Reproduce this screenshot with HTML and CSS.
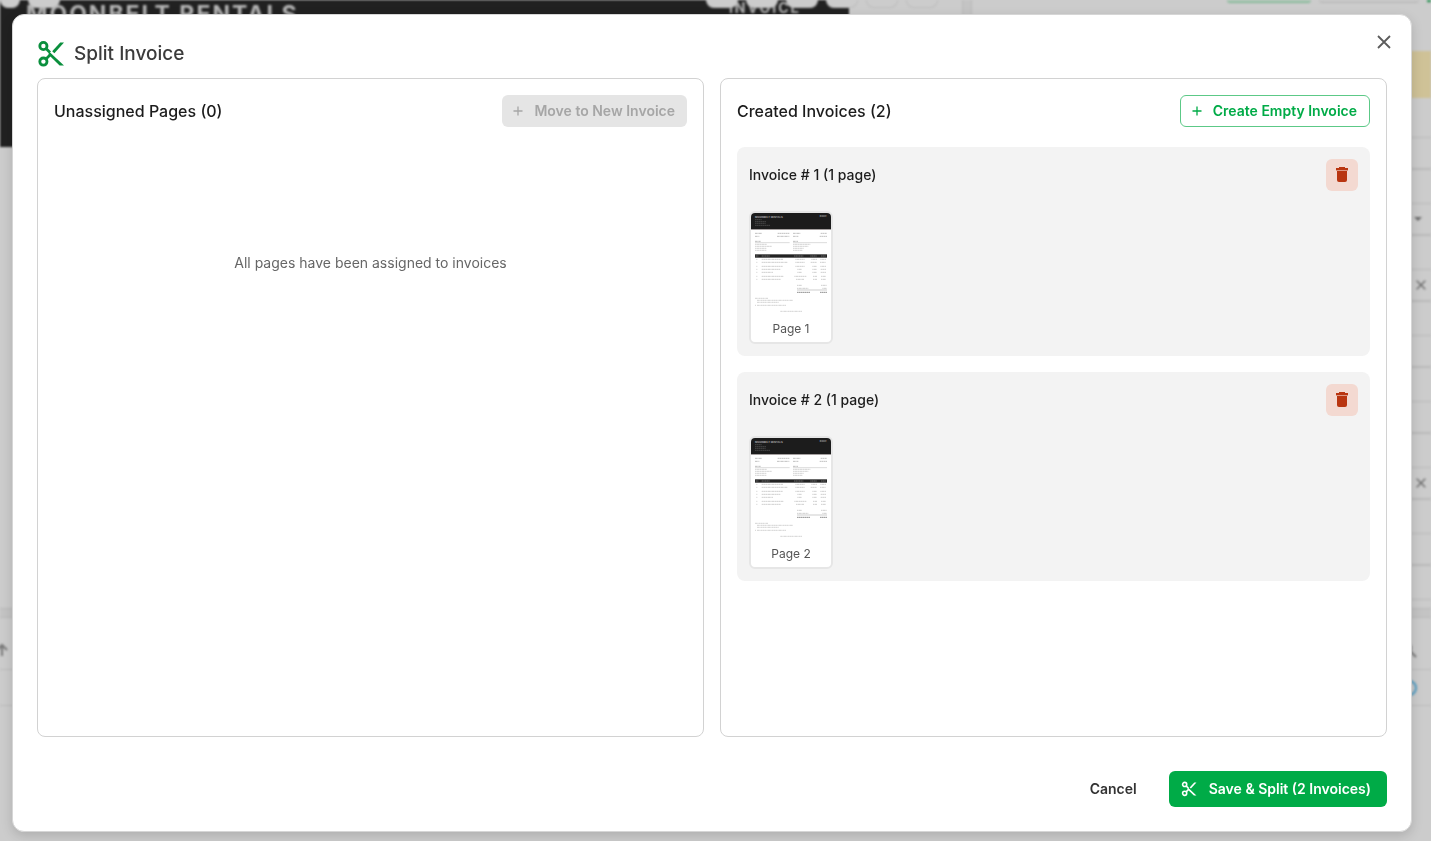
FILE: index.html
```html
<!DOCTYPE html>
<html lang="en">
<head>
    <meta charset="UTF-8">
    <meta name="viewport" content="width=device-width, initial-scale=1.0">
    <title>Split Invoice</title>
    <link rel="stylesheet" href="styles.css">
</head>
<body>

<svg class="sprite" aria-hidden="true">
    <symbol id="icon-cut" viewBox="0 0 28 28">
        <g fill="none" stroke="currentColor" stroke-width="2.8">
            <circle cx="6.4" cy="6" r="3.6"/>
            <circle cx="6.4" cy="21.6" r="3.6"/>
            <path d="M9 8.6L13 12.6M9 19L14 14"/>
        </g>
        <path d="M12 11.4L27 25.4H22.6L11.6 14.8z" fill="currentColor"/>
        <path d="M15.2 11.2L23.2 2.6H27L17.4 13.2z" fill="currentColor"/>
    </symbol>
    <symbol id="icon-plus" viewBox="0 0 12 12">
        <path d="M6 1.5v9M1.5 6h9" fill="none" stroke="currentColor" stroke-width="1.3"/>
    </symbol>
    <symbol id="icon-close" viewBox="0 0 14 14">
        <path d="M1 1l12 12M13 1L1 13" fill="none" stroke="currentColor" stroke-width="1.8"/>
    </symbol>
    <symbol id="icon-trash" viewBox="0 0 12 16">
        <path d="M3 0h6v1h3v2H0V1h3z" fill="currentColor"/>
        <path d="M0 3h12v1H0z" fill="currentColor" opacity="0.4"/>
        <path d="M1 4h10v9q0 2-2 2H3q-2 0-2-2z" fill="currentColor"/>
    </symbol>
    <!-- small preview of an invoice page -->
    <symbol id="page-preview" viewBox="0 0 240 312">
        <rect width="240" height="312" fill="#fff"/>
        <rect width="240" height="48" fill="#1c1c1c"/>
        <rect y="48" width="240" height="3" fill="#a5a0a0"/>
        <text x="12" y="15" font-size="8" font-weight="700" fill="#a8a8a8">MOONBELT RENTALS</text>
        <text x="206" y="12" font-size="5" font-weight="700" fill="#a8a8a8">INVOICE</text>
        <g stroke="#5c5c5c" stroke-width="2" stroke-dasharray="5 1">
            <path d="M12 20h20M12 26h33M12 31h32M12 37h45"/>
        </g>
        <g stroke="#c0c0c0" stroke-width="3" stroke-dasharray="6 1 4 1">
            <path d="M12 61h21M80 61h35M126 61h22M209 61h19"/>
            <path d="M12 70h13M78 70h37M126 70h16M206 70h22"/>
            <path d="M12 85h17M126 85h15"/>
        </g>
        <path d="M12 89h104M126 89h102" stroke="#dcdcdc" stroke-width="3"/>
        <g stroke="#bcbcbc" stroke-width="2" stroke-dasharray="5 1 8 1">
            <path d="M12 94h36M12 100h51M12 106h34M12 112h34"/>
            <path d="M126 94h52M126 100h46M126 106h32M126 112h28"/>
        </g>
        <rect x="12" y="124" width="216" height="10" fill="#222"/>
        <g stroke="#8c8c8c" stroke-width="2" stroke-dasharray="4 1">
            <path d="M14 129h8M32 129h25M129 129h28M178 129h20M210 129h15"/>
        </g>
        <g stroke="#cfcfcf" stroke-width="3" stroke-dasharray="4 1 7 1">
            <path d="M16 139h3M32 139h64M133 139h28M181 139h17M208 139h17"/>
            <path d="M16 148h3M32 148h78M133 148h28M179 148h19M207 148h18"/>
            <path d="M16 160h3M32 160h63M133 160h28M184 160h14M208 160h17"/>
            <path d="M16 169h3M32 169h56M139 169h14M184 169h14M209 169h16"/>
            <path d="M16 178h3M32 178h34M139 178h14M184 178h14M209 178h16"/>
            <path d="M16 190h3M32 190h66M130 190h36M186 190h12M210 190h15"/>
            <path d="M16 199h3M32 199h58M135 199h24M186 199h12M210 199h15"/>
            <path d="M138 217h15M210 217h18M138 226h34M214 226h14"/>
        </g>
        <path d="M138 231h90" stroke="#dedede" stroke-width="5"/>
        <path d="M138 238h39M207 238h21" stroke="#909090" stroke-width="3" stroke-dasharray="5 1"/>
        <g stroke="#bdbdbd" stroke-width="2" stroke-dasharray="6 1 3 1">
            <path d="M12 256h40M18 262h108M18 268h66M12 277h3M18 277h88M88 295h65"/>
        </g>
    </symbol>
</svg>

<div class="app" aria-hidden="true" inert>
    <div class="viewer">
        <div class="document">
            <span class="company">MOONBELT RENTALS</span>
            <span class="doc-type">INVOICE</span>
        </div>
        <div class="toolbar">
            <button class="tool half-tool"></button>
            <button class="tool"></button>
            <button class="tool push-right"></button>
            <button class="tool"></button>
            <button class="tool"></button>
            <button class="tool"></button>
            <button class="tool"></button>
            <button class="tool"></button>
        </div>
    </div>
    <div class="splitter"></div>
    <div class="details">
        <div class="actions">
            <button class="action action-green"></button>
            <button class="action"></button>
            <button class="action action-solid"></button>
        </div>
        <div class="notice"></div>
        <div class="field"></div>
        <div class="field"><span class="caret"></span></div>
        <div class="field"><svg class="clear"><use href="#icon-close"/></svg></div>
        <div class="field"></div>
        <div class="field"></div>
        <div class="field"><svg class="clear"><use href="#icon-close"/></svg></div>
        <div class="field"></div>
        <div class="field"></div>
    </div>
    <div class="splitter row-splitter"></div>
    <div class="lines">
        <div class="lines-head">
            <svg class="arrow" viewBox="0 0 16 16"><path d="M8 14V3M3 8l5-5 5 5" fill="none" stroke="#777" stroke-width="2"/></svg>
            <svg class="search" viewBox="0 0 16 16"><circle cx="6" cy="6" r="4" fill="none" stroke="#777" stroke-width="2"/><path d="M9 9l6 6" stroke="#777" stroke-width="2"/></svg>
        </div>
        <div class="lines-row"><span class="ring"></span></div>
    </div>
</div>

<div class="backdrop">
    <div class="dialog" role="dialog" aria-modal="true" aria-labelledby="dialog-title">
        <div class="dialog-header">
            <svg class="title-icon"><use href="#icon-cut"/></svg>
            <h1 class="title" id="dialog-title">Split Invoice</h1>
            <button class="close" aria-label="Close"><svg class="close-icon"><use href="#icon-close"/></svg></button>
        </div>

        <div class="panels">
            <section class="panel">
                <div class="panel-header">
                    <h2 class="panel-title">Unassigned Pages (0)</h2>
                    <button class="btn btn-disabled" disabled><svg class="plus"><use href="#icon-plus"/></svg>Move to New Invoice</button>
                </div>
                <p class="empty">All pages have been assigned to invoices</p>
            </section>

            <section class="panel">
                <div class="panel-header">
                    <h2 class="panel-title">Created Invoices (2)</h2>
                    <button class="btn btn-outline"><svg class="plus"><use href="#icon-plus"/></svg>Create Empty Invoice</button>
                </div>

                <div class="invoices">
                    <article class="invoice">
                        <div class="invoice-header">
                            <h3 class="invoice-title">Invoice # 1 (1 page)</h3>
                            <button class="delete" aria-label="Delete invoice 1"><svg class="trash"><use href="#icon-trash"/></svg></button>
                        </div>
                        <figure class="page">
                            <svg class="preview"><use href="#page-preview"/></svg>
                            <figcaption class="page-label">Page 1</figcaption>
                        </figure>
                    </article>

                    <article class="invoice">
                        <div class="invoice-header">
                            <h3 class="invoice-title">Invoice # 2 (1 page)</h3>
                            <button class="delete" aria-label="Delete invoice 2"><svg class="trash"><use href="#icon-trash"/></svg></button>
                        </div>
                        <figure class="page">
                            <svg class="preview"><use href="#page-preview"/></svg>
                            <figcaption class="page-label">Page 2</figcaption>
                        </figure>
                    </article>
                </div>
            </section>
        </div>

        <div class="dialog-footer">
            <button class="btn btn-text">Cancel</button>
            <button class="btn btn-primary"><svg class="cut"><use href="#icon-cut"/></svg>Save &amp; Split (2 Invoices)</button>
        </div>
    </div>
</div>

</body>
</html>
```

FILE: styles.css
```css
*
{
    box-sizing:border-box;
}
body
{
    margin:0;
    height:100vh;
    overflow:hidden;
    background-color:#cccccc;
    color:#1c1c1c;
    font-family:Inter, "Liberation Sans", sans-serif;
    font-size:14px;
}
button
{
    padding:0;
    border:none;
    background-color:transparent;
    font-family:inherit;
    cursor:pointer;
}
h1,h2,h3,p,figure
{
    margin:0;
}
.sprite
{
    position:absolute;
    width:0;
    height:0;
}

/* page behind the dialog */
.app
{
    display:grid;
    grid-template-columns:1fr 10px 459px;
    grid-template-rows:1fr 10px 223px;
    height:100vh;
    filter:blur(1px);
}
.viewer
{
    position:relative;
    overflow:hidden;
}
.document
{
    display:flex;
    justify-content:space-between;
    align-items:flex-start;
    width:849px;
    height:147px;
    padding:0 48px 0 26px;
    background-color:#212121;
    color:#b5b5b5;
    font-weight:700;
}
.company
{
    font-size:23px;
    line-height:28px;
    letter-spacing:2px;
}
.doc-type
{
    font-size:14px;
    line-height:16px;
    letter-spacing:2px;
}
.toolbar
{
    position:absolute;
    top:0;
    left:0;
    right:24px;
    display:flex;
    gap:8px;
}
.tool
{
    width:32px;
    height:8px;
    background-color:#cccccc;
    border:1px solid #bcbcbc;
    border-top:none;
    border-radius:0 0 8px 8px;
}
.tool + .tool
{
    width:32px;
}
.half-tool
{
    width:20px;
}
.push-right
{
    margin-left:auto;
}
.splitter
{
    background-color:#c4c4c4;
    border:solid #b9b9b9;
    border-width:0 1px;
}
.row-splitter
{
    grid-column:1 / -1;
    border-width:1px 0;
}
.details
{
    overflow:hidden;
}
.actions
{
    display:flex;
    justify-content:flex-end;
    gap:8px;
    height:51px;
}
.action
{
    width:100px;
    height:3px;
    background-color:#c6c6c6;
    border-bottom:1px solid #b5b5b5;
    border-radius:0 0 6px 6px;
}
.action-green
{
    width:84px;
    background-color:#a5c4b0;
    border-color:#78b48e;
}
.action-solid
{
    width:4px;
    background-color:#0b8f3f;
}
.notice
{
    height:47px;
    margin-bottom:39px;
    background-color:#cfc297;
}
.field
{
    display:flex;
    justify-content:flex-end;
    align-items:center;
    height:33px;
    margin-bottom:33px;
    padding-right:5px;
    border:solid #b9b9b9;
    border-width:1px 0 2px;
}
.caret
{
    margin-right:4px;
    border:4px solid transparent;
    border-top-color:#6c6c6c;
    border-bottom:none;
}
.clear
{
    width:10px;
    height:10px;
    color:#666666;
}
.lines
{
    grid-column:1 / -1;
}
.lines-head,.lines-row
{
    display:flex;
    justify-content:space-between;
    align-items:center;
    height:52px;
    padding:12px 14px 0 0;
    border-bottom:1px solid #bbbbbb;
}
.lines-row
{
    justify-content:flex-end;
    height:36px;
    padding-top:0;
}
.arrow
{
    width:16px;
    height:16px;
    margin-left:-6px;
}
.search
{
    width:16px;
    height:16px;
}
.ring
{
    width:16px;
    height:16px;
    border:2px solid #4d9cc4;
    border-radius:50%;
}

/* dialog */
.backdrop
{
    position:fixed;
    inset:0;
    display:flex;
    padding:14px 19px 9px 12px;
}
.dialog
{
    flex:1;
    display:flex;
    flex-direction:column;
    padding:24px;
    background-color:white;
    border:1px solid #d6d6d6;
    border-radius:12px;
    box-shadow:0 4px 12px rgba(0, 0, 0, 0.15);
}
.dialog-header
{
    position:relative;
    display:flex;
    align-items:center;
    gap:9px;
    height:29px;
    margin-bottom:10px;
}
.title-icon
{
    width:28px;
    height:28px;
    color:#0a8f3d;
}
.title
{
    color:#3b3b3b;
    font-size:19px;
    font-weight:500;
}
.close
{
    position:absolute;
    top:-9px;
    right:-9px;
    display:grid;
    place-items:center;
    width:24px;
    height:24px;
    color:#5c5c5c;
}
.close-icon
{
    width:14px;
    height:14px;
}
.panels
{
    flex:1;
    display:grid;
    grid-template-columns:1fr 1fr;
    gap:16px;
}
.panel
{
    padding:16px;
    border:1px solid #d2d2d2;
    border-radius:8px;
}
.panel-header,.invoice-header
{
    display:flex;
    justify-content:space-between;
    align-items:center;
    margin-bottom:20px;
}
.panel-title
{
    font-size:16px;
    font-weight:500;
}
.btn
{
    display:flex;
    align-items:center;
    height:32px;
    border-radius:6px;
    font-size:14px;
    font-weight:600;
    line-height:20px;
}
.btn-disabled,.btn-outline
{
    gap:10px;
    padding:0 12px 0 10px;
}
.btn-disabled
{
    background-color:#e5e5e5;
    color:#a6a6a6;
}
.btn-outline
{
    border:1px solid #5cc987;
    color:#00ab47;
}
.plus
{
    width:12px;
    height:12px;
}
.empty
{
    margin-top:126px;
    color:#666666;
    font-size:14px;
    line-height:20px;
    text-align:center;
}
.invoices
{
    display:flex;
    flex-direction:column;
    gap:16px;
}
.invoice
{
    padding:12px;
    background-color:#f3f3f3;
    border-radius:8px;
}
.invoice-title
{
    font-size:14px;
    font-weight:500;
    line-height:20px;
}
.delete
{
    display:grid;
    place-items:center;
    width:32px;
    height:32px;
    background-color:#f3d9d1;
    border-radius:6px;
    color:#b93510;
}
.trash
{
    width:12px;
    height:16px;
}
.page
{
    width:84px;
    overflow:hidden;
    background-color:white;
    border:2px solid #e6e6e6;
    border-radius:6px;
}
.preview
{
    display:block;
    width:80px;
    height:104px;
}
.page-label
{
    padding:4px 0 5px;
    color:#555555;
    font-size:12px;
    line-height:16px;
    text-align:center;
}
.dialog-footer
{
    display:flex;
    justify-content:flex-end;
    gap:16px;
    margin-top:34px;
}
.btn-text,.btn-primary
{
    height:36px;
    padding:0 16px;
}
.btn-text
{
    color:#333333;
}
.btn-primary
{
    gap:12px;
    padding-left:12px;
    background-color:#00ab47;
    color:white;
}
.cut
{
    width:16px;
    height:16px;
}
```
